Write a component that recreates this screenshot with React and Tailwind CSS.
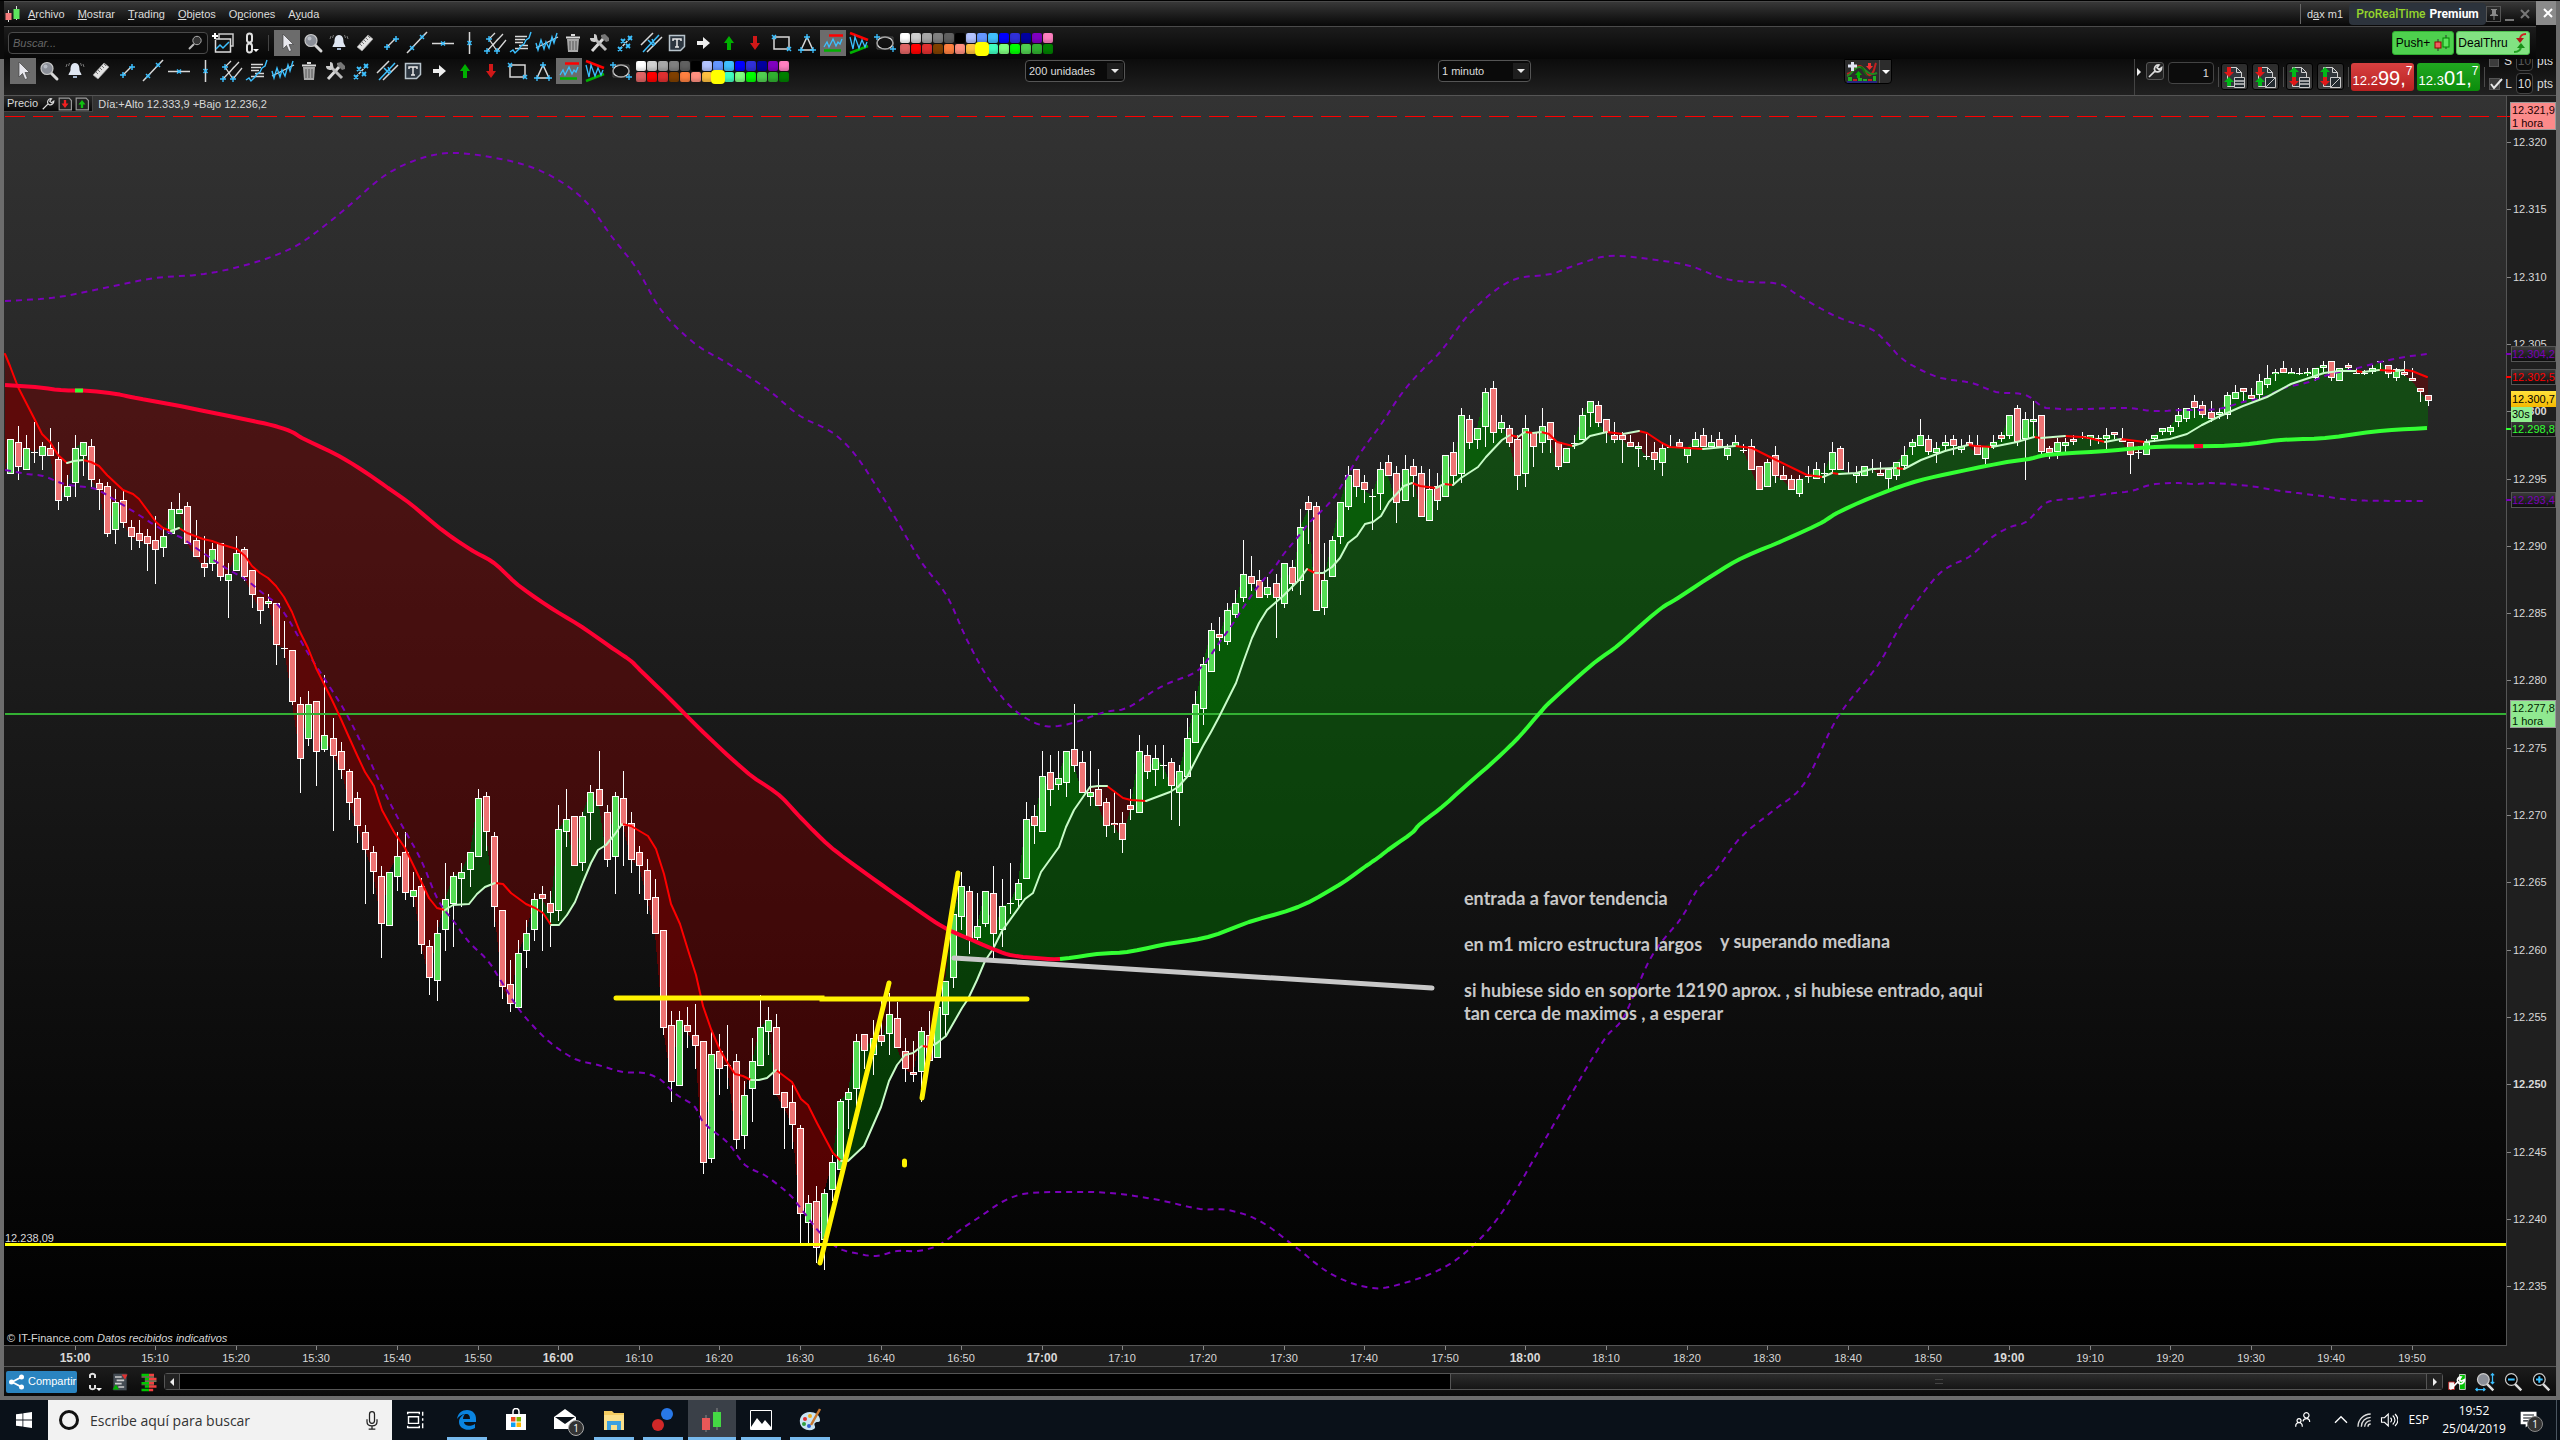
import React, { useMemo, useState } from "react";

// one entry per minute from 14:52: colour, high, body top, body bottom, low (chart units)
const CANDLES = `
g439,439,474,474 r426,442,467,480 g435,448,470,470 d422,452,452,463 g442,446,456,470 r428,448,456,456 r442,459,501,510 g475,486,497,501
g435,448,483,497 g442,442,456,476 r439,446,480,487 r479,483,490,510 r482,486,534,537 g489,502,530,544 r490,500,523,528 r520,527,537,550
r520,533,541,548 r529,536,544,571 r516,540,550,584 g529,536,548,557 g502,509,534,534 g493,509,514,514 r502,506,544,544 r520,540,557,557
r536,563,568,577 g543,549,564,571 r543,543,577,581 g563,574,581,618 g536,553,571,571 r547,549,577,581 r570,570,595,608 r597,597,611,624
g594,601,604,608 r603,603,645,665 d621,648,648,658 r650,650,702,705 r697,704,759,793 g691,704,739,746 r701,701,752,786 g675,735,750,752
r718,738,756,831 r742,751,770,779 r769,771,803,820 r792,798,826,843 r825,832,850,904 r846,852,872,894 r866,876,924,958 g872,872,926,926
g832,856,877,891 r832,852,893,900 g872,890,897,907 r878,886,945,954 r940,946,978,995 g920,933,981,1001 g863,899,930,951 g872,876,904,947
g863,872,879,907 g852,852,870,887 g789,798,857,857 r792,796,832,851 r832,836,907,927 r910,910,987,999 r960,984,1004,1012 g940,953,1008,1008
g920,933,951,968 g893,899,930,941 r886,894,899,951 r891,903,913,947 g805,829,911,921 g789,819,832,847 r816,816,866,866 g812,816,863,871
g785,792,813,840 r751,789,806,806 r805,812,860,867 g792,796,857,894 r771,798,826,866 r812,823,860,873 r846,852,866,894 r859,870,900,914
r879,897,934,934 r930,930,1028,1035 r1011,1025,1082,1102 g1011,1020,1086,1086 r1007,1025,1032,1048 r1004,1035,1046,1069 r1041,1041,1163,1174 g1031,1054,1159,1163
r1034,1051,1069,1095 d1025,1065,1065,1089 r1054,1061,1140,1149 g1081,1095,1136,1149 g1038,1061,1089,1122 g995,1027,1066,1066 g1007,1020,1032,1055 r1014,1027,1095,1095
r1092,1092,1108,1149 r1085,1102,1125,1149 r1125,1128,1214,1244 g1195,1203,1223,1244 r1186,1201,1248,1263 g1189,1193,1240,1270 g1155,1162,1190,1201 g1099,1101,1170,1170
g1088,1092,1100,1129 g1034,1041,1089,1111 r1034,1034,1051,1069 g1020,1038,1055,1075 r1000,1035,1042,1046 g993,1014,1034,1055 r1002,1018,1048,1048 r1038,1051,1069,1082
r1041,1072,1075,1082 g1027,1031,1072,1102 r1011,1035,1061,1061 g1007,1007,1058,1058 g981,981,1015,1036 g914,914,978,988 g872,886,917,930 r886,891,940,954
g893,926,938,940 g891,891,924,927 r866,893,934,958 g879,906,930,947 d863,903,903,914 g879,883,900,909 g802,819,879,879 r805,816,826,844
g751,776,832,832 r755,772,790,806 g751,778,785,790 g751,751,783,797 r704,749,766,772 r751,762,793,793 g751,792,797,806 r769,789,806,806
r798,802,826,837 r792,823,825,833 r812,823,840,853 r789,805,810,820 g735,751,813,813 r745,755,772,779 g745,758,770,786 d745,765,765,779
r758,762,786,820 g765,771,793,826 g718,738,777,777 g691,704,743,743 g657,664,709,725 g623,630,672,672 r617,634,638,651 g603,610,642,645
g590,603,615,618 g540,574,598,602 r556,576,584,591 r570,580,598,598 g577,587,595,598 r574,583,598,638 g563,563,604,608 r560,567,584,591
g509,527,581,595 r496,502,510,544 r502,506,611,611 g543,580,608,615 g536,540,577,577 g502,502,537,544 g466,475,507,510 r469,469,487,497
r475,482,490,503 d489,496,496,530 g462,469,494,510 r455,462,476,476 r466,473,503,523 g455,469,501,501 r459,466,476,497 r466,473,517,517
g469,489,521,521 r473,486,501,510 g455,455,497,497 r442,452,476,484 g408,415,474,483 r415,419,443,449 g428,428,440,449 g388,392,427,447
r381,388,433,443 g415,422,429,433 r425,428,443,447 r435,439,476,490 g415,428,474,487 r432,432,447,467 g408,426,443,453 r422,422,440,453
r442,442,467,470 g448,448,463,463 d435,443,443,449 g408,415,440,440 g401,401,413,427 r401,405,423,427 r419,419,433,443 r422,435,440,443
r432,435,440,463 r435,442,447,447 g442,446,449,467 d433,456,456,460 r442,452,460,470 g444,448,463,476 d435,447,447,448 r439,442,447,447
g447,447,456,463 g432,439,447,447 r428,435,447,447 g435,442,447,447 r432,439,447,447 g444,448,456,460 g435,442,447,447 d444,450,450,453
r439,446,470,470 r466,466,490,490 g459,462,487,487 r446,455,476,483 r466,475,480,480 r475,479,490,490 g475,479,494,497 d466,476,476,483
g462,469,479,479 d463,473,473,483 g442,452,470,473 r446,448,470,470 d462,473,473,474 g466,473,476,483 g466,466,476,476 d459,469,469,473
r462,473,476,476 g469,469,479,490 g462,462,476,480 g446,455,466,469 g439,442,447,455 g419,435,446,446 r435,439,452,455 g442,448,453,463
g435,442,446,450 r435,439,446,455 g439,446,450,453 r435,442,446,446 r435,445,455,455 g446,446,459,464 g435,442,446,449 r432,435,439,442
g415,415,436,439 r405,408,442,446 g412,419,439,480 g401,419,422,436 r415,415,452,456 r446,448,453,459 g438,442,452,459 g438,442,446,455
r435,439,442,445 d432,436,436,439 g435,435,439,446 d435,438,438,444 g428,435,439,449 r432,432,435,439 r428,439,442,442 r442,442,455,474
d446,452,452,459 g439,442,455,455 g435,435,439,442 g428,428,432,435 g425,427,432,435 g408,415,422,427 g408,408,419,422 r395,401,408,418
r401,405,415,418 r401,412,419,422 g408,412,415,419 g392,395,415,419 g385,392,399,399 r388,388,392,402 r388,395,399,399 g374,381,395,399
g365,378,385,388 g369,372,374,381 r361,368,373,373 g368,372,374,374 d368,373,373,375 g368,372,374,376 g368,368,378,381 g361,365,368,372
r361,361,378,381 g368,368,381,381 r363,365,368,372 d368,373,373,374 d370,373,373,375 g365,368,372,374 d361,361,361,370 r365,365,374,378
g368,369,378,381 r361,372,375,376 r368,378,381,381 r388,388,392,402 r395,395,401,406`;

const FAST_MA = `5,354 10,366 18,387 35,420 42,434 50,442 58,455 67,463 74,461 83,460 91,462 99,466 107,475 123,490 133,494 139,499 156,522 163,528 171,531 179,528 187,533 203,539 212,541 220,544 237,549 245,556 252,566 260,573 268,578 276,586 284,597 292,612 300,632 308,648 316,668 324,684 332,700 340,717 348,735 357,755 365,772 374,786 382,810 394,832 405,848 421,881 429,898 437,908 445,910 453,905 469,904 477,894 485,887 495,883 503,884 511,893 526,904 535,908 543,913 551,925 559,925 567,915 575,902 583,882 591,863 598,850 606,845 615,834 622,824 631,826 648,836 656,849 664,874 671,904 680,924 688,950 696,975 703,1006 711,1029 719,1048 727,1062 735,1074 743,1076 751,1080 759,1080 767,1078 776,1070 792,1082 801,1099 808,1105 817,1123 833,1153 841,1161 848,1161 864,1146 881,1107 889,1081 897,1065 905,1055 913,1053 922,1046 929,1047 937,1043 946,1036 962,1008 968,999 977,980 985,961 993,949 1002,931 1025,899 1033,893 1041,872 1059,847 1066,827 1074,810 1090,787 1098,786 1107,786 1123,798 1131,800 1146,801 1154,798 1170,792 1178,787 1187,777 1203,746 1211,732 1219,717 1236,683 1244,660 1252,638 1259,623 1267,610 1283,596 1291,588 1299,580 1307,569 1315,573 1323,573 1332,567 1340,558 1348,543 1357,536 1365,524 1373,522 1381,516 1389,502 1404,486 1412,483 1420,486 1436,488 1444,484 1453,485 1461,478 1478,467 1486,457 1502,440 1510,435 1518,437 1525,432 1533,433 1541,432 1549,434 1557,442 1573,446 1582,443 1590,436 1607,432 1623,434 1639,431 1647,433 1662,443 1670,447 1687,448 1703,449 1735,446 1752,448 1776,460 1807,475 1823,477 1832,473 1839,474 1856,473 1872,469 1896,468 1904,469 1921,460 1945,451 1968,445 1976,446 1992,447 2017,442 2034,437 2041,438 2065,436 2082,437 2089,438 2105,442 2121,439 2145,442 2170,439 2187,434 2202,425 2218,417 2243,406 2267,397 2291,384 2324,373 2339,371 2356,371 2363,372 2379,370 2396,371 2404,370 2412,371 2427,377`;

const SLOW_MA = `5,385 35,387 61,390 90,391 116,394 131,397 147,400 180,406 204,411 229,416 253,421 275,426 292,432 302,438 339,456 365,472 388,488 408,502 437,526 453,538 473,551 494,563 518,585 551,608 582,627 612,648 631,661 640,670 671,700 703,732 749,774 779,795 800,817 825,842 842,856 882,885 909,904 935,922 951,931 972,940 993,949 1010,955 1036,958 1060,959 1097,954 1127,952 1167,944 1208,937 1249,922 1298,907 1339,885 1366,866 1379,857 1388,850 1413,832 1419,825 1442,807 1469,783 1493,762 1518,738 1538,715 1549,703 1594,663 1616,647 1647,620 1663,607 1678,598 1710,577 1740,559 1782,541 1821,523 1837,513 1875,496 1914,482 1952,473 2007,462 2029,459 2046,455 2106,451 2155,447 2216,446 2249,444 2281,440 2325,438 2380,431 2427,428`;

const BAND_UP = `5,301 40,299 65,296 114,286 155,278 204,274 253,263 294,247 323,227 351,204 384,176 416,160 449,153 490,157 531,167 563,183 588,204 612,237 637,269 661,310 694,343 727,363 767,389 800,416 833,433 857,457 890,509 922,563 947,596 967,640 988,678 1009,705 1029,720 1045,726 1058,726 1076,722 1105,712 1127,708 1152,692 1169,683 1194,673 1205,663 1219,643 1232,625 1243,608 1259,585 1274,568 1283,555 1297,538 1310,522 1332,500 1346,478 1361,452 1382,423 1397,400 1411,382 1424,368 1442,350 1469,314 1510,281 1551,274 1576,265 1608,256 1649,259 1690,266 1722,278 1747,282 1780,284 1796,294 1829,313 1850,322 1873,330 1889,345 1900,357 1917,368 1941,378 1972,383 1996,392 2026,395 2046,408 2128,408 2153,411 2183,410 2218,409 2243,402 2265,397 2284,388 2309,382 2331,374 2358,368 2380,362 2405,357 2427,354`;

const BAND_LOW = `5,470 27,474 43,476 61,483 76,486 86,487 98,490 118,502 139,515 163,530 180,537 196,548 212,559 229,570 245,579 265,595 278,605 290,622 306,650 324,678 347,715 367,755 382,787 400,822 421,860 438,900 455,923 469,942 488,961 501,981 518,1008 535,1028 552,1044 575,1059 598,1065 623,1072 644,1073 661,1080 674,1093 695,1107 703,1122 728,1143 745,1165 766,1176 791,1196 802,1210 821,1234 838,1248 855,1253 876,1256 897,1251 918,1251 939,1245 960,1230 981,1216 1002,1202 1023,1194 1060,1192 1110,1193 1159,1200 1200,1209 1228,1210 1260,1221 1298,1249 1331,1274 1371,1288 1401,1284 1445,1267 1478,1241 1505,1208 1543,1143 1576,1086 1606,1037 1622,1020 1636,990 1649,961 1663,940 1682,917 1697,890 1716,870 1740,838 1774,810 1804,784 1837,718 1878,665 1904,620 1936,577 1952,565 1969,557 1991,538 2010,527 2026,522 2043,505 2051,501 2079,498 2106,494 2131,491 2150,485 2172,483 2196,484 2210,483 2249,486 2281,491 2314,495 2353,500 2402,501 2427,501`;

const minuteX = m => 74.6 + 8.06 * m;
const toPoints = str => str.split(" ").map(p => p.split(",").map(Number));
const toString = points => points.map(p => p.map(v => v.toFixed(1)).join(",")).join(" ");

// Hermite curve through the points, four steps for each span
function smooth(points) {
  const slope = i => {
    const a = points[Math.max(0, i - 1)];
    const b = points[Math.min(points.length - 1, i + 1)];
    return (b[1] - a[1]) / (b[0] - a[0]);
  };
  const out = [points[0]];
  for (let i = 1; i < points.length; i++) {
    const [x0, y0] = points[i - 1];
    const [x1, y1] = points[i];
    const w = x1 - x0;
    for (let s = 1; s <= 4; s++) {
      const t = s / 4;
      const y =
        (2 * t ** 3 - 3 * t ** 2 + 1) * y0 +
        (t ** 3 - 2 * t ** 2 + t) * w * slope(i - 1) +
        (-2 * t ** 3 + 3 * t ** 2) * y1 +
        (t ** 3 - t ** 2) * w * slope(i);
      out.push([x0 + w * t, y]);
    }
  }
  return out;
}

const candles = CANDLES.trim().split(/\s+/).map((row, i) => {
  const [high, top, bottom, low] = row.slice(1).split(",").map(Number);
  const kind = row[0];
  return { x: Math.round(minuteX(i - 8)), high, top, bottom, low, kind, close: kind === "g" ? top : bottom };
});

function valueAt(points, x) {
  for (let i = 1; i < points.length; i++) {
    if (points[i][0] >= x) {
      const [x0, y0] = points[i - 1];
      const [x1, y1] = points[i];
      return y0 + ((y1 - y0) * (x - x0)) / (x1 - x0);
    }
  }
  return points[points.length - 1][1];
}

// splits the area between the closes and an average into the part above it and the part below it
function clouds(points) {
  const out = { up: "", down: "" };
  const rows = [{ x: 5, close: 474 }, ...candles].map(c => ({ x: c.x, c: c.close, m: valueAt(points, c.x) }));
  for (let i = 1; i < rows.length; i++) {
    const a = rows[i - 1];
    const b = rows[i];
    const da = a.m - a.c;
    const db = b.m - b.c;
    if (da * db >= 0) {
      out[da + db > 0 ? "up" : "down"] += `M${a.x} ${a.c}L${b.x} ${b.c}L${b.x} ${b.m}L${a.x} ${a.m}Z`;
    } else {
      const t = da / (da - db);
      const x = a.x + (b.x - a.x) * t;
      const y = a.c + (b.c - a.c) * t;
      out[da > 0 ? "up" : "down"] += `M${a.x} ${a.c}L${x} ${y}L${a.x} ${a.m}Z`;
      out[db > 0 ? "up" : "down"] += `M${b.x} ${b.c}L${x} ${y}L${b.x} ${b.m}Z`;
    }
  }
  return out;
}

function bySlope(points) {
  const out = { up: "", down: "" };
  for (let i = 1; i < points.length; i++) {
    const [x0, y0] = points[i - 1];
    const [x1, y1] = points[i];
    out[y1 > y0 ? "down" : "up"] += `M${x0} ${y0}L${x1} ${y1}`;
  }
  return out;
}

const PRICES = Array.from({ length: 18 }, (_, i) => 12320 - i * 5);
const TIMES = Array.from({ length: 30 }, (_, i) => i * 10);

function formatPrice(p) {
  return `12.${String(p - 12000).padStart(3, "0")}`;
}

function Tag({ y, text, color }) {
  return (
    <g>
      <path d={`M2506 ${y}h5`} stroke={color} strokeWidth="2" />
      <rect x="2511.5" y={y - 7.5} width="44" height="15" fill="url(#tag)" stroke="#555" />
      <text x="2512" y={y + 4} fill={color}>{text}</text>
    </g>
  );
}

function Chart() {
  const data = useMemo(() => {
    const fast = toPoints(FAST_MA);
    const slow = smooth(toPoints(SLOW_MA));
    return {
      fast: bySlope(fast),
      fastCloud: clouds(fast),
      slowCloud: clouds(slow),
      slowRed: toString(slow.filter(p => p[0] <= 1060)),
      slowGreen: toString(slow.filter(p => p[0] >= 1060)),
      bandUp: toString(smooth(toPoints(BAND_UP))),
      bandLow: toString(smooth(toPoints(BAND_LOW))),
    };
  }, []);
  return (
    <svg
      viewBox="4 96 2552 1270"
      preserveAspectRatio="none"
      className="block w-full h-full font-['Liberation_Sans',sans-serif] text-[11px]"
    >
      <defs>
        <linearGradient id="back" x1="0" y1="0" x2="0" y2="1">
          <stop offset="0" stopColor="#333333" />
          <stop offset="1" stopColor="#000000" />
        </linearGradient>
        <linearGradient id="tag" x1="0" y1="0" x2="0" y2="1">
          <stop offset="0" stopColor="#3a3a3a" />
          <stop offset="1" stopColor="#0c0c0c" />
        </linearGradient>
        <linearGradient id="gold" x1="0" y1="0" x2="0" y2="1">
          <stop offset="0" stopColor="#ffe13c" />
          <stop offset="1" stopColor="#f5b800" />
        </linearGradient>
      </defs>
      <rect x="4" y="96" width="2552" height="1270" fill="#1f1f1f" />
      <rect x="4" y="96" width="2502" height="1249" fill="url(#back)" />

      <g fillOpacity="0.47" shapeRendering="crispEdges">
        <path d={data.slowCloud.down} fill="#750000" />
        <path d={data.slowCloud.up} fill="#007300" />
        <path d={data.fastCloud.down} fill="#750000" />
        <path d={data.fastCloud.up} fill="#007300" />
      </g>

      <g shapeRendering="crispEdges">
        {candles.map((c, i) => (
          <g key={i}>
            <rect x={c.x} y={c.high} width="1" height={c.low - c.high} fill="#fff" />
            {c.kind === "d" ? (
              <rect x={c.x - 3} y={c.top} width="7" height="1" fill="#fff" />
            ) : (
              <>
                <rect x={c.x - 3} y={c.top} width="7" height={c.bottom - c.top} fill="#fff" />
                <rect
                  x={c.x - 2}
                  y={c.top + 1}
                  width="5"
                  height={Math.max(1, c.bottom - c.top - 2)}
                  fill={c.kind === "g" ? "#55dd55" : "#ee7474"}
                />
              </>
            )}
          </g>
        ))}
      </g>

      <g fill="none">
        <path d="M5 714H2506" stroke="#33b033" strokeWidth="2" shapeRendering="crispEdges" />
        <path d="M5 116.5H2510" stroke="#f00" strokeDasharray="20 8" />
        <polyline points={data.bandUp} stroke="#7a00b8" strokeWidth="2" strokeDasharray="6 5" />
        <polyline points={data.bandLow} stroke="#7a00b8" strokeWidth="2" strokeDasharray="6 5" />
        <path d={data.fast.down} stroke="#f00" strokeWidth="2" strokeLinecap="round" />
        <path d={data.fast.up} stroke="#c8fcc8" strokeWidth="2" strokeLinecap="round" />
        <polyline points={data.slowRed} stroke="#ff0033" strokeWidth="4" strokeLinejoin="round" />
        <polyline points={data.slowGreen} stroke="#33ff33" strokeWidth="4" strokeLinejoin="round" />
        <path d="M75 390.5H83" stroke="#33ff33" strokeWidth="4" />
        <path d="M2194 446H2203" stroke="#ff0033" strokeWidth="4" />
        <path d="M5 1244.5H2506" stroke="#ffff00" strokeWidth="3" shapeRendering="crispEdges" />
        <g stroke="#fff200" strokeWidth="5" strokeLinecap="round">
          <path d="M616 998H822V999H1027" />
          <path d="M889 983L820 1263" />
          <path d="M958 873L922 1098" />
          <path d="M904.500 1161V1165" />
        </g>
        <path d="M954 958L1432 988" stroke="#c8c8c8" strokeWidth="5" strokeLinecap="round" />
      </g>

      <g className="font-['Lato','Noto_Sans',sans-serif] text-[18px] font-bold" fill="#c8c8c8">
        <text x="1464" y="905">entrada a favor tendencia</text>
        <text x="1464" y="951">en m1 micro estructura largos</text>
        <text x="1720" y="948">y superando mediana</text>
        <text x="1464" y="997">si hubiese sido en soporte 12190 aprox. , si hubiese entrado, aqui</text>
        <text x="1464" y="1020">tan cerca de maximos , a esperar</text>
      </g>

      <g fill="#d8d8d8">
        <text x="5" y="1242">12.238,09</text>
        <text x="7" y="1342">© IT-Finance.com <tspan fontStyle="italic">Datos recibidos indicativos</tspan></text>
      </g>

      <g shapeRendering="crispEdges" fill="none" stroke="#555">
        <path d="M4 1345.5H2506.5V96" />
      </g>
      <g fill="#d8d8d8">
        {PRICES.map(p => {
          const y = Math.round(142 + (12320 - p) * 13.46);
          return (
            <g key={p}>
              <path d={`M2507 ${y + 0.5}h4`} stroke="#888" />
              <text x="2513" y={y + 4} fontWeight={p === 12250 || p === 12300 ? "bold" : "normal"}>{formatPrice(p)}</text>
            </g>
          );
        })}
        {TIMES.map(m => {
          const x = Math.round(minuteX(m));
          const hour = 15 + Math.floor(m / 60);
          return (
            <g key={m} textAnchor="middle">
              <path d={`M${x + 0.5} 1346v4`} stroke="#888" />
              <text x={x} y="1362" fontWeight={m % 60 === 0 ? "bold" : "normal"} fontSize={m % 60 === 0 ? 12 : 11}>
                {`${hour}:${String(m % 60).padStart(2, "0")}`}
              </text>
            </g>
          );
        })}
      </g>

      <Tag y={354} text="12.304,2" color="#7a00b8" />
      <Tag y={377} text="12.302,5" color="#ff0000" />
      <Tag y={429} text="12.298,8" color="#33ff33" />
      <Tag y={500} text="12.293,4" color="#7a00b8" />
      <rect x="2511" y="391" width="45" height="16" fill="url(#gold)" />
      <text x="2512" y="403" fill="#000">12.300,7</text>
      <rect x="2511" y="407" width="21" height="15" fill="#90ee90" />
      <text x="2512" y="418" fill="#000">30s</text>
      <g>
        <rect x="2510.5" y="102.5" width="45" height="27" fill="#fb8a8a" stroke="#999" />
        <text x="2512" y="114" fill="#200">12.321,9</text>
        <text x="2512" y="127" fill="#200">1 hora</text>
        <rect x="2510.5" y="700.5" width="45" height="27" fill="#90e890" stroke="#999" />
        <text x="2512" y="712" fill="#020">12.277,8</text>
        <text x="2512" y="725" fill="#020">1 hora</text>
      </g>
    </svg>
  );
}

const W = "#d8d8d8";
const B = "#3cc0ff";

const cross = (x, y) => `M${x - 2} ${y - 2}l4 4m0 -4l-4 4`;
const plus = (x, y) => `M${x - 3} ${y}h6m-3 -3v6`;

const TOOL_ICONS = {
  Puntero: <path d="M8 3v15l3.500 -3.500 2.500 6 2.500 -1 -2.500 -6h4.500z" fill="#e8e8ee" stroke="#444" strokeWidth="0.7" />,
  Zoom: (
    <>
      <path d="M14 14l6 6" stroke={W} strokeWidth="3" strokeLinecap="round" />
      <circle cx="10" cy="9.500" r="6" fill="#8b8f98" stroke="#c8c8c8" strokeWidth="1.200" />
      <circle cx="8.500" cy="7.500" r="2" fill="#b8bcc4" />
    </>
  ),
  Alerta: (
    <>
      <path d="M12 4c-4 0 -4.500 4 -4.500 7 0 2 -2 3 -2 5h13c0 -2 -2 -3 -2 -5 0 -3 -.5 -7 -4.500 -7z" fill="#dfe6f2" />
      <path d="M10 17h4v2h-4z" fill="#9fb0c8" />
      <path d="M4 5l-1 3M6.500 4l-1 3M20 5l1 3M17.500 4l1 3" stroke="#777" />
    </>
  ),
  Regla: (
    <>
      <path d="M4 16l11 -12 5 4 -11 12z" fill="#e4e4e4" stroke="#999" strokeWidth="0.7" />
      <path d="M7 13l2 2M9 11l2 2M11 9l2 2M13 7l2 2M15 5l2 2" stroke="#777" />
    </>
  ),
  Segmento: (
    <>
      <path d="M8 16l8 -8" stroke={W} strokeWidth="1.500" />
      <path d={plus(8, 16) + plus(17, 8)} stroke={B} strokeWidth="1.500" />
    </>
  ),
  Recta: (
    <>
      <path d="M2 22L22 1" stroke={W} strokeWidth="1.500" />
      <path d={cross(7, 17) + cross(17, 6)} stroke={B} strokeWidth="1.500" />
    </>
  ),
  Horizontal: (
    <>
      <path d="M1 12.500h22" stroke={W} strokeWidth="1.500" />
      <path d={cross(12, 12.500)} stroke={B} strokeWidth="1.500" />
    </>
  ),
  Vertical: (
    <>
      <path d="M12.500 1v22" stroke={W} strokeWidth="1.500" />
      <path d={cross(12.500, 12)} stroke={B} strokeWidth="1.500" />
    </>
  ),
  Horquilla: (
    <>
      <path d="M6 8l6 -6M4 20l16 -17M14 20l9 -11M10 14l5 -6M6 8l8 12" stroke={W} strokeWidth="1.300" />
      <path d={plus(6, 8) + plus(4, 20) + plus(14, 20)} stroke={B} strokeWidth="1.400" />
    </>
  ),
  Fibonacci: (
    <>
      <path d="M6 5.500h12M6 8.500h10M6 11.500h8M10 14.500h9M6 17.500h13" stroke={W} strokeWidth="1.300" />
      <path d="M1 21l3 -2 2 3 4 -4 2 -3 3 -2 2 -4 3 -2 2 -6" stroke={B} strokeWidth="1.400" />
    </>
  ),
  Regresion: (
    <>
      <path d="M1 17L23 6" stroke={W} strokeWidth="1.300" />
      <path d="M1 12l2 7 3 -10 3 9 2 -7 3 6 3 -11 2 6 3 -10" stroke={B} strokeWidth="1.400" />
    </>
  ),
  Borrar: (
    <>
      <path d="M6 8h12l-1 13h-10z" fill="#a8a8a8" />
      <path d="M5 6.500h14M10 4h4" stroke={W} strokeWidth="2" />
      <path d="M9 10v9M12 10v9M15 10v9" stroke="#555" />
    </>
  ),
  Configurar: (
    <>
      <path d="M14 4l4 -1 4 4v3l-3 1 -5 -5z" fill="#777" />
      <path d="M5 20L16 8" stroke={W} strokeWidth="3" />
      <path d="M8 8l11 11" stroke="#bbb" strokeWidth="3" />
      <path d="M7 3v4H3c0 3 2 4 5 4 2 -1 3 -3 2 -5 0 -2 -1 -3 -3 -3z" fill="#ccc" />
    </>
  ),
  Extension: (
    <>
      <path d="M7 18L18 6" stroke={W} strokeWidth="1.500" strokeDasharray="3 1" />
      <path d={cross(7, 18) + cross(17, 7) + cross(10, 10) + cross(15, 15)} stroke={B} strokeWidth="1.800" />
    </>
  ),
  Canal: (
    <>
      <path d="M2 14L14 2M8 21L23 6" stroke={W} strokeWidth="1.500" />
      <path d="M4 21L20 4M9 9l6 6M13 8l3 6" stroke={B} strokeWidth="1.500" />
    </>
  ),
  Texto: (
    <>
      <path d="M4.500 4.500h15v11l-4 4h-11z" fill="#2c3640" stroke="#b8c4cc" strokeWidth="1.500" />
      <path d="M8 10V8h8v2M12 8v8M10 16h4" stroke="#e8e8e8" strokeWidth="1.500" />
    </>
  ),
  "Flecha derecha": <path d="M6 10h6V6l7 6 -7 6v-4H6z" fill="#eeeeee" />,
  "Flecha arriba": <path d="M10 19v-7H7l5 -7 5 7h-3v7z" fill="#00b000" />,
  "Flecha abajo": <path d="M10 5v7H7l5 7 5 -7h-3V5z" fill="#d01818" />,
  Rectangulo: (
    <>
      <path d="M5 6h15v12h-15z" stroke={W} strokeWidth="1.500" />
      <path d={cross(5, 6) + cross(20, 18)} stroke={B} strokeWidth="1.500" />
    </>
  ),
  Triangulo: (
    <>
      <path d="M12 6l-6 13h12z" stroke={W} strokeWidth="1.500" />
      <path d={plus(12, 6) + plus(6, 19) + plus(18, 19)} stroke={B} strokeWidth="1.300" />
    </>
  ),
  Soportes: (
    <>
      <path d="M8 4.500h14" stroke="#f00" strokeWidth="2.500" />
      <path d="M3 19.500h17" stroke="#00b000" strokeWidth="2.500" />
      <path d="M3 16l3 -5 2 5 4 -8 3 7 2 -4 2 2 2 -5" stroke={B} strokeWidth="1.300" />
    </>
  ),
  Patrones: (
    <>
      <path d="M3 2l18 7" stroke="#f00" strokeWidth="2.500" />
      <path d="M3 22l18 -7" stroke="#00b000" strokeWidth="2.500" />
      <path d="M3 6l3 12 2 -12 4 11 3 -8 3 7 2 -5" stroke={B} strokeWidth="1.300" />
    </>
  ),
  Elipse: (
    <>
      <ellipse cx="12" cy="12" rx="8" ry="6" stroke={W} strokeWidth="1.500" />
      <path d="M4 6h16v12H4z" stroke="#555" strokeWidth="0.800" />
      <path d={plus(4, 6) + plus(20, 18)} stroke={B} strokeWidth="1.300" />
    </>
  ),
};

function Svg({ size = "w-6 h-6", children }) {
  return (
    <svg viewBox="0 0 24 24" fill="none" className={`shrink-0 ${size}`}>
      {children}
    </svg>
  );
}

const PALETTE = [
  ["#ffffff", "#d0d0d0", "#a8a8a8", "#808080", "#606060", "#000000", "#b4c4ff", "#6496ff", "#40c0ff", "#0000ff", "#3030d8", "#0000a0", "#8000c0", "#ff80c0"],
  ["#e06464", "#ff0000", "#e03030", "#804000", "#ff8040", "#ff9080", "#ffc040", "#ffff00", "#40ffc0", "#80ff80", "#00ff00", "#50d050", "#30b030", "#008000"],
];

function DrawingTools() {
  const [active, setActive] = useState("Puntero");
  return (
    <div className="flex items-center">
      {Object.entries(TOOL_ICONS).map(([name, icon]) => (
        <button
          key={name}
          aria-label={name}
          onClick={() => setActive(name)}
          className={`w-[26px] h-[26px] flex items-center justify-center ${
            name === active || name === "Soportes" ? "bg-[#6c6c6c]" : ""
          }`}
        >
          <Svg>{icon}</Svg>
        </button>
      ))}
      <div className="ml-[2px] flex flex-col gap-px">
        {PALETTE.map((row, i) => (
          <div key={i} className="flex gap-px">
            {row.map(color => (
              <button
                key={color}
                aria-label={color}
                style={{ backgroundColor: color }}
                className={`w-[10px] h-[10px] rounded-[2px] ${
                  color === "#ffff00" ? "relative ring-2 ring-[#ffff00]" : "shadow-[inset_0_-3px_3px_rgba(0,0,0,0.15)]"
                }`}
              />
            ))}
          </div>
        ))}
      </div>
    </div>
  );
}

const MENU = [["", "A", "rchivo"], ["", "M", "ostrar"], ["", "T", "rading"], ["", "O", "bjetos"], ["O", "p", "ciones"], ["A", "y", "uda"]];

function Chain({ split }) {
  return (
    <Svg>
      <path d={split ? "M9 8V5a3 3 0 0 1 5 0v3M9 15v3a3 3 0 0 0 5 0v-3" : "M9 10V5a2.500 2.500 0 0 1 5 0v4a2.500 2.500 0 0 1 -5 0zM9 19v-4a2.500 2.500 0 0 1 5 0v4a2.500 2.500 0 0 1 -5 0z"} stroke="#e0e0e0" strokeWidth="2" />
      <path d="M15 18h6l-3 3z" fill="#fff" />
    </Svg>
  );
}

function TitleBar() {
  return (
    <div className="h-[25px] flex items-center bg-linear-to-b from-[#383838] to-[#080808] border-t border-[#4a4a4a] text-[#dcdcdc]">
      <svg viewBox="0 0 16 18" className="w-4 h-[18px] mr-2">
        <path d="M4.500 5v12M12.500 1v14" stroke="#ddd" />
        <rect x="1.500" y="8" width="6" height="7" fill="#f47c7c" />
        <rect x="9.500" y="4" width="6" height="10" fill="#5ee65e" />
      </svg>
      <nav className="flex gap-[13px]">
        {MENU.map(([a, key, b]) => (
          <button key={key + b}>
            {a}
            <span className="underline">{key}</span>
            {b}
          </button>
        ))}
      </nav>
      <div className="ml-auto flex items-center">
        <span className="border-l border-[#666] px-[6px] leading-5">
          d<span className="underline">a</span>x m1
        </span>
        <span className="w-[137px] h-[22px] flex items-center justify-center gap-1 bg-[#2c333c] rounded-sm font-['Roboto','Liberation_Sans',sans-serif] text-[12px] font-medium text-[#96d62c]">
          ProRealTime <b className="text-white">Premium</b>
        </span>
        <button aria-label="Fijar" className="w-[15px] h-4 border border-[#555] flex items-center justify-center">
          <svg viewBox="0 0 12 12" className="w-3 h-3"><path d="M3 1h6v1H8v4l2 1v1H2V7l2 -1V2H3zM5.500 8h1v4h-1z" fill="#888" /></svg>
        </button>
        <button aria-label="Minimizar" className="w-4 h-4 flex items-end justify-center pb-[1px]">
          <span className="w-[9px] h-[2px] bg-[#777]" />
        </button>
        <button aria-label="Cerrar" className="w-4 h-4 flex items-center justify-center mr-[3px]">
          <svg viewBox="0 0 10 10" className="w-[10px] h-[10px]"><path d="M1 1l8 8M9 1l-8 8" stroke="#777" strokeWidth="2" /></svg>
        </button>
      </div>
    </div>
  );
}

function MainToolbar() {
  return (
    <div className="h-[33px] flex items-center bg-linear-to-b from-[#1c1c1c] to-[#070707] border-t border-[#4a4a4a]">
      <div className="ml-1 w-[200px] h-[22px] flex items-center rounded border border-[#4a4a4a] bg-[#0c0c0c] px-1">
        <input aria-label="Buscar" placeholder="Buscar..." className="flex-1 min-w-0 italic bg-transparent outline-none placeholder:text-[#666]" />
        <svg viewBox="0 0 16 16" fill="none" className="w-4 h-4">
          <circle cx="10" cy="5.500" r="4.200" stroke="#aaa" fill="#333" />
          <path d="M7 9l-5 5" stroke="#bbb" strokeWidth="2" />
        </svg>
      </div>
      <button aria-label="Nuevo gráfico" className="ml-[3px]">
        <Svg>
          <path d="M8 8V3h14v12h-3" stroke="#ccc" strokeWidth="1.500" />
          <path d="M4.500 9v12h15V8h-15" stroke="#ddd" strokeWidth="1.500" fill="#111" />
          <path d="M5 18l4 -4 3 3 6 -6" stroke={B} strokeWidth="1.500" />
          <path d="M1 5h6M4 2v6" stroke="#fff" strokeWidth="2" />
        </Svg>
      </button>
      <button aria-label="Vincular" className="ml-[3px]"><Chain /></button>
      <span className="w-px h-4 bg-[#444] ml-[6px] mr-[5px]" />
      <DrawingTools />
      <div className="ml-auto flex gap-[2px] mr-[6px] text-black text-[12px]">
        <button className="w-[62px] h-6 flex items-center justify-center gap-1 rounded-[3px] bg-[#4ed04e] border border-[#2fae2f]">
          Push+
          <svg viewBox="0 0 16 16" className="w-4 h-4">
            <path d="M4 4v12M12 0v14" stroke="#333" />
            <rect x="1" y="7" width="6" height="6" fill="#f06060" stroke="#900" />
            <rect x="9" y="3" width="6" height="9" fill="#5ee65e" stroke="#080" />
          </svg>
        </button>
        <button className="w-[74px] h-6 flex items-center justify-center gap-1 rounded-[3px] bg-[#82e282] border border-[#4fc04f]">
          DealThru
          <svg viewBox="0 0 16 20" fill="none" className="w-4 h-5">
            <path d="M14 1C9 1 8 3 8 7" stroke="#d02020" strokeWidth="2" />
            <path d="M4 5h8l-4 5z" fill="#b01818" />
            <path d="M2 19c5 0 7 -2 7 -6" stroke="#20a020" strokeWidth="2" />
            <path d="M5 15h8l-4 -5z" fill="#189018" />
          </svg>
        </button>
      </div>
    </div>
  );
}

function Dropdown({ label, options, width }) {
  return (
    <div className={`relative h-[22px] flex items-center rounded border border-[#555] bg-[#0a0a0a] ${width}`}>
      <select aria-label={label} className="appearance-none w-full h-full bg-transparent pl-[3px] outline-none">
        {options.map(o => <option key={o}>{o}</option>)}
      </select>
      <svg viewBox="0 0 16 16" className="absolute right-[1px] w-4 h-4 pointer-events-none">
        <rect width="16" height="16" fill="#1e1e1e" />
        <path d="M4 6h8l-4 4z" fill="#e8e8e8" />
      </svg>
    </div>
  );
}

function OrderButton({ name, top, bottom, flip, slash }) {
  return (
    <button aria-label={name} className="w-[27px] h-[27px] rounded-[3px] border border-black bg-linear-to-b from-[#2c2c2c] to-[#3c3c3c] flex items-center justify-center">
      <Svg>
        <path d="M5.500 2.500h9l5 5v14h-14z" fill="#30363c" stroke="#d0d0d0" />
        <path d="M14.500 2.500v5h5" stroke="#d0d0d0" />
        <path d={slash ? "M12.500 12.500h10v10h-10zM12.500 22.500l10 -10" : "M12.500 12.500h10v3.500h-10zM12.500 16h10v3h-10zM12.500 19h10v3.500h-10z"} fill="#222a30" stroke="#c8c8c8" />
        {flip ? (
          <path d="M2 7l5 -5 5 5H9v5H5V7z" fill={top} />
        ) : (
          <path d="M5 2h4v5h3l-5 5 -5 -5h3z" fill={top} />
        )}
        {flip ? (
          <path d="M5 12h4v4h3l-5 5 -5 -5h3z" fill={bottom} />
        ) : (
          <path d="M2 17l5 -5 5 5H9v4H5v-4z" fill={bottom} />
        )}
      </Svg>
    </button>
  );
}

function Divider() {
  return <span className="w-px self-stretch my-2 bg-[#4a4a4a]" />;
}

function Quote({ side, small, big, tiny, className }) {
  return (
    <button aria-label={side} className={`w-[63px] h-7 rounded-[3px] flex items-end justify-center text-white ${className}`}>
      <span className="text-[13px] leading-5">{small}</span>
      <span className="text-[20px] leading-[26px]">{big},</span>
      <span className="text-[12px] leading-4 self-start">{tiny}</span>
    </button>
  );
}

function StopRow({ name, checked, dim }) {
  return (
    <div className="shrink-0 flex items-center h-[23px] gap-1">
      <label className="relative flex items-center gap-[5px] w-[23px]">
        <input type="checkbox" defaultChecked={checked} className="appearance-none w-3 h-3 bg-[#3c3c3c] border border-[#555]" />
        {checked && (
          <svg viewBox="0 0 14 12" fill="none" className="absolute left-0 w-[14px] h-3 pointer-events-none">
            <path d="M2 6l3 4 8 -9" stroke="#e8e8e8" strokeWidth="2" />
          </svg>
        )}
        {name}
      </label>
      <input
        aria-label={`${name} pts`}
        defaultValue="10"
        className={`w-[17px] h-[21px] rounded border border-[#444] bg-[#0c0c0c] text-center outline-none ${dim ? "text-[#555]" : ""}`}
      />
      <span>pts</span>
    </div>
  );
}

function ChartToolbar() {
  return (
    <div className="h-[37px] flex bg-linear-to-b from-[#0c0c0c] to-[#212121] border-b border-[#555] text-[#dcdcdc]">
      <div className="ml-[6px] -mt-px self-start"><DrawingTools /></div>
      <div className="ml-[236px] mt-px self-start">
        <Dropdown label="Unidades" options={["200 unidades"]} width="w-[100px]" />
      </div>
      <div className="ml-[313px] mt-px self-start">
        <Dropdown label="Intervalo" options={["1 minuto"]} width="w-[93px]" />
      </div>
      <div className="ml-[313px] flex self-start h-[25px] bg-[#2c2c2c] border border-black rounded-b">
        <button aria-label="Indicadores" className="px-px">
          <svg viewBox="0 0 32 22" fill="none" className="w-8 h-[22px]">
            <path d="M1 13C8 12 9 4 14 5s5 11 10 9 4 -8 6 -12" stroke="#c02020" strokeWidth="2" />
            <path d="M1 15c6 -2 7 -10 13 -9s8 10 17 6" stroke="#208820" strokeWidth="2" />
            <path d="M14 5c5 0 5 9 9 10 -4 1 -6 -5 -9 -10z" fill="#0f6a0f" />
            <path d="M2 20v-4h4v4zM12 20v-3h4v3zM17 20v-2h4v2zM27 20v-5h3v5z" fill="#20b020" />
            <path d="M7 20v-2h4v2zM22 20v-2h4v2z" fill="#c02020" />
            <path d="M1 21h30" stroke="#2020d0" />
            <path d="M2 5h9M6.500 1v9" stroke="#e0e4f4" strokeWidth="3" />
            <path d="M22 2h3v3h2l-3.500 4 -3.500 -4h2z" fill="#f03030" />
            <path d="M11 17v-3H9l3.500 -4 3.500 4h-2v3z" fill="#00b000" />
          </svg>
        </button>
        <button aria-label="Más indicadores" className="w-3 border-l border-[#555] flex items-center justify-center">
          <svg viewBox="0 0 8 4" className="w-2 h-1"><path d="M0 0h8l-4 4z" fill="#fff" /></svg>
        </button>
      </div>
      <div className="ml-auto flex items-start gap-[4px] border-l border-[#444] pl-[2px]">
        <svg viewBox="0 0 5 8" className="w-[5px] h-2 mt-[9px]"><path d="M0 0v8l4 -4z" fill="#eee" /></svg>
        <button aria-label="Ajustes" className="mt-[3px] w-[18px] h-[18px] rounded-[3px] border border-[#555] bg-[#222] flex items-center justify-center">
          <Svg size="w-4 h-4"><path d="M3 21L13 11M12 12a6 6 0 0 1 6 -9l-3 4 3 3 4 -3a6 6 0 0 1 -8 6z" stroke="#ddd" strokeWidth="2.500" /></Svg>
        </button>
        <input aria-label="Cantidad" defaultValue="1" className="mt-[3px] w-[46px] h-[22px] rounded border border-[#444] bg-[#0c0c0c] text-right pr-1 outline-none" />
        <Divider />
        <div className="flex gap-1 pt-1 -ml-[2px]">
          <OrderButton name="Comprar a mercado" top="#e01818" bottom="#00b818" />
          <OrderButton name="Comprar con orden" top="#e01818" bottom="#00b818" slash />
        </div>
        <Divider />
        <div className="flex gap-1 pt-1 -ml-[2px]">
          <OrderButton name="Vender a mercado" top="#00b818" bottom="#e01818" flip />
          <OrderButton name="Vender con orden" top="#00b818" bottom="#e01818" flip slash />
        </div>
        <Divider />
        <div className="flex gap-[3px] pt-1 -ml-[2px]">
          <Quote side="Vender" small="12.2" big="99" tiny="7" className="bg-linear-to-b from-[#d84040] to-[#b82020]" />
          <Quote side="Comprar" small="12.3" big="01" tiny="7" className="bg-linear-to-b from-[#20a820] to-[#0a8c0a]" />
        </div>
        <Divider />
        <div className="h-9 overflow-hidden flex flex-col justify-end pr-[3px] text-[12px]">
          <StopRow name="S" dim />
          <StopRow name="L" checked />
        </div>
      </div>
    </div>
  );
}

function ChartHeader() {
  return (
    <div className="absolute left-0 top-0 flex items-center h-4 text-[#d8d8d8]">
      <div className="h-4 flex items-center gap-[3px] px-[3px] bg-linear-to-b from-[#2a2a2a] to-[#080808] border-r border-b border-[#444]">
        Precio
        <Svg size="w-[14px] h-[14px]"><path d="M3 21L13 11M12 12a6 6 0 0 1 6 -9l-3 4 3 3 4 -3a6 6 0 0 1 -8 6z" stroke="#ddd" strokeWidth="2" /></Svg>
        <Svg size="w-[14px] h-[14px]">
          <path d="M2 2h17l4 4v16H2z" fill="#222" stroke="#999" strokeWidth="2" />
          <path d="M10 5h4v6h4l-6 8 -6 -8h4z" fill="#f02020" />
        </Svg>
        <Svg size="w-[14px] h-[14px]">
          <path d="M2 2h17l4 4v16H2z" fill="#222" stroke="#999" strokeWidth="2" />
          <path d="M10 19h4v-6h4l-6 -8 -6 8h4z" fill="#10c010" />
        </Svg>
      </div>
      <span className="ml-[5px]">Día:+Alto 12.333,9 +Bajo 12.236,2</span>
    </div>
  );
}

function Magnifier({ sign, arrows }) {
  return (
    <Svg size="w-5 h-5">
      <path d="M14 14l8 8" stroke="#ddd" strokeWidth="3" />
      <circle cx="10" cy="9" r="7" fill={arrows ? "#8b8f98" : "#000"} stroke="#ccc" strokeWidth="1.500" />
      {sign && <path d={sign === "+" ? "M6 9h8M10 5v8" : "M6 9h8"} stroke={B} strokeWidth="2.500" />}
      {arrows && <path d="M21 2v12M19 4l2 -2 2 2M19 12l2 2 2 -2M1 21h11M3 19l-2 2 2 2M10 19l2 2 -2 2" stroke={B} strokeWidth="1.500" />}
    </Svg>
  );
}

function BottomBar() {
  return (
    <div className="h-[30px] flex items-center bg-linear-to-b from-[#1c1c1c] to-[#0a0a0a] border-t border-[#555]">
      <button className="ml-[2px] w-[71px] h-[22px] flex items-center gap-[4px] px-[3px] rounded-[2px] bg-[#2a84c0] text-white text-[11px]">
        <Svg size="w-[15px] h-4">
          <path d="M20 4L5 12l15 8" stroke="#fff" strokeWidth="3" />
          <circle cx="20" cy="4" r="4" fill="#fff" />
          <circle cx="4" cy="12" r="4" fill="#fff" />
          <circle cx="20" cy="20" r="4" fill="#fff" />
        </Svg>
        Compartir
      </button>
      <button aria-label="Vincular" className="ml-1"><Chain split /></button>
      <button aria-label="Informe" className="ml-[5px]">
        <Svg size="w-5 h-5">
          <path d="M4 2h16v20H4z" fill="#444c54" />
          <path d="M6 6h8M8 10h9M6 14h8M10 18h7" stroke="#ccc" strokeWidth="2" />
          <path d="M14 3h7l-3 6z" fill="#e03030" />
          <path d="M3 21l4 -6 4 6z" fill="#00b000" />
        </Svg>
      </button>
      <button aria-label="Libro de órdenes" className="ml-[9px]">
        <Svg size="w-5 h-5">
          <path d="M3 2h9v3H3zM7 7h5v3H7zM3 12h9v3H3zM7 16h5v3H7zM3 20h9v3H3z" fill="#00c800" />
          <path d="M12 2h6v3h-6zM12 7h9v3h-9zM12 12h6v3h-6zM12 16h9v3h-9zM12 20h5v3h-5z" fill="#f04040" />
          <path d="M3 5h15v2H3zM7 10h14v2H7zM3 15h15v1H3z" fill="#d8d8a0" fillOpacity="0.500" />
        </Svg>
      </button>
      <div className="ml-[5px] mr-1 flex-1 h-[17px] flex border border-[#555] rounded-[3px] bg-black">
        <button aria-label="Desplazar a la izquierda" className="w-[15px] bg-[#222] border-r border-[#555] flex items-center justify-center">
          <svg viewBox="0 0 4 8" className="w-1 h-2"><path d="M4 0v8L0 4z" fill="#eee" /></svg>
        </button>
        <span className="flex-[1271]" />
        <span className="flex-[975] bg-linear-to-b from-[#2c2c2c] to-[#161616] border-x border-[#555] flex items-center justify-center">
          <span className="w-2 h-[5px] border-y border-[#444]" />
        </span>
        <button aria-label="Desplazar a la derecha" className="w-[15px] bg-[#222] flex items-center justify-center">
          <svg viewBox="0 0 4 8" className="w-1 h-2"><path d="M0 0v8l4 -4z" fill="#eee" /></svg>
        </button>
      </div>
      <div className="flex gap-2 mr-[5px]">
        <button aria-label="Configurar gráfico">
          <Svg size="w-5 h-5">
            <path d="M2 12h7v9H2z" stroke="#c02020" fill="#f4f4f4" />
            <path d="M15 3h7v18h-7z" fill="#00c000" stroke="#ddd" />
            <path d="M4 21L14 11M13 12a4 4 0 0 1 4 -6l-2 3 2 2 4 -2a5 5 0 0 1 -6 5z" stroke="#fff" strokeWidth="2" />
          </Svg>
        </button>
        <button aria-label="Ajustar zoom"><Magnifier arrows /></button>
        <button aria-label="Alejar"><Magnifier sign="-" /></button>
        <button aria-label="Acercar"><Magnifier sign="+" /></button>
      </div>
    </div>
  );
}

const APPS = [
  { name: "Edge", open: true, icon: <path d="M2 11C3 5 7 2 12 2c6 0 9 4 9 9v3H9c0 4 7 5 11 2v4c-7 4 -16 1 -16 -6 0 -4 3 -7 6 -8 -1 1 -2 3 -2 5h7c0 -3 -1 -5 -4 -5 -4 0 -7 2 -9 5z" fill="#0a84e0" /> },
  {
    name: "Store",
    icon: (
      <>
        <path d="M9 6V3.500a3 3 0 0 1 6 0V6" stroke="#fff" strokeWidth="1.500" />
        <path d="M2 6h20v16H2z" fill="#fff" />
        <path d="M7 9h4.500v4.500H7z" fill="#f04c20" />
        <path d="M12.500 9H17v4.500h-4.500z" fill="#7cb800" />
        <path d="M7 14.500h4.500V19H7z" fill="#10a0f0" />
        <path d="M12.500 14.500H17V19h-4.500z" fill="#ffb800" />
      </>
    ),
  },
  {
    name: "Correo",
    badge: "1",
    icon: (
      <>
        <path d="M1 9L12 1l11 8v12H1z" fill="#fff" />
        <path d="M2 9h20l-10 7z" fill="#0a1119" />
      </>
    ),
  },
  {
    name: "Explorador",
    open: true,
    icon: (
      <>
        <path d="M2 3h8l2 2h10v17H2z" fill="#f4cc60" />
        <path d="M2 7h20v15H2z" fill="#fbe08a" />
        <path d="M5 13h14v9h-4v-5H9v5H5z" fill="#3ca0e0" />
      </>
    ),
  },
  {
    name: "Plataforma",
    open: true,
    icon: (
      <>
        <circle cx="16" cy="6" r="6" fill="#2878e8" />
        <circle cx="7" cy="17" r="6" fill="#d02828" />
      </>
    ),
  },
  {
    name: "ProRealTime",
    open: true,
    active: true,
    icon: (
      <>
        <path d="M6 7v17M17 0v22" stroke="#888" />
        <path d="M2 10h8v12H2z" fill="#e85858" />
        <path d="M13 4h8v15h-8z" fill="#44d844" />
      </>
    ),
  },
  {
    name: "Fotos",
    open: true,
    icon: (
      <>
        <path d="M1.500 2.500h21v19h-21z" stroke="#fff" fill="#0a1119" />
        <path d="M2 19l6 -9 5 6 3 -4 6 7v3H2z" fill="#fff" />
      </>
    ),
  },
  {
    name: "Paint",
    open: true,
    icon: (
      <>
        <path d="M12 4C5 4 1 9 2 15s9 9 14 6c3 -2 -1 -4 1 -6s5 0 5 -3c0 -5 -5 -8 -10 -8z" fill="#c8e4f4" />
        <circle cx="7" cy="11" r="2" fill="#e03030" />
        <circle cx="12" cy="8" r="2" fill="#f0b020" />
        <circle cx="6" cy="16" r="2" fill="#30a040" />
        <circle cx="11" cy="18" r="2" fill="#3060d0" />
        <path d="M22 1l-9 16" stroke="#c87830" strokeWidth="2.500" />
      </>
    ),
  },
];

function Taskbar() {
  return (
    <div className="h-10 flex items-center bg-[#0a1119] text-white font-['Open_Sans',sans-serif] text-[12px]">
      <button aria-label="Inicio" className="w-12 h-10 flex items-center justify-center">
        <svg viewBox="0 0 16 16" className="w-4 h-4"><path d="M0 2.300l6.500 -.9v6.200H0zM7.300 1.300L16 0v7.600H7.300zM0 8.400h6.500v6.200L0 13.700zM7.300 8.400H16V16l-8.700 -1.300z" fill="#fff" /></svg>
      </button>
      <label className="w-[344px] h-10 flex items-center gap-[10px] px-[10px] bg-[#f2f2f2]">
        <svg viewBox="0 0 22 22" fill="none" className="w-[22px] h-[22px]"><circle cx="11" cy="11" r="8.500" stroke="#111" strokeWidth="3" /></svg>
        <input aria-label="Buscar en Windows" placeholder="Escribe aquí para buscar" className="flex-1 bg-transparent text-[14px] outline-none placeholder:text-[#333]" />
        <Svg size="w-5 h-5"><path d="M9 5a3 3 0 0 1 6 0v8a3 3 0 0 1 -6 0zM6 11v3c0 4 3 5 6 5s6 -1 6 -5v-3M12 19v4M8 23h8" stroke="#222" strokeWidth="1.500" /></Svg>
      </label>
      <button aria-label="Vista de tareas" className="w-[47px] flex justify-center">
        <Svg size="w-5 h-5"><path d="M3 8h12v8H3zM2 5V3h14v2M2 19v2h14v-2M20 2v5M20 10v3M20 16v6" stroke="#fff" strokeWidth="1.700" /></Svg>
      </button>
      <div className="flex ml-1">
        {APPS.map(app => (
          <button key={app.name} aria-label={app.name} className={`relative w-12 h-10 mr-px flex items-center justify-center ${app.active ? "bg-[#3a4048]" : ""}`}>
            <Svg size="w-6 h-6">{app.icon}</Svg>
            {app.badge && (
              <span className="absolute right-[5px] bottom-1 w-4 h-4 rounded-full bg-[#333] border border-[#aaa] text-[10px] leading-[14px]">{app.badge}</span>
            )}
            {app.open && <span className={`absolute bottom-0 h-[3px] bg-[#76b9ed] ${app.active ? "w-12" : "w-10"}`} />}
          </button>
        ))}
      </div>
      <div className="ml-auto flex items-center pr-[3px]">
        <button aria-label="Contactos" className="mr-[22px]">
          <Svg size="w-4 h-4"><path d="M1 22c0 -8 10 -8 10 0M6 16a3 3 0 1 1 .1 0M12 14c1 -5 10 -6 10 1M17 9a4 4 0 1 1 .1 0" stroke="#fff" strokeWidth="1.800" /></Svg>
        </button>
        <button aria-label="Iconos ocultos" className="mr-[7px]">
          <Svg size="w-4 h-4"><path d="M3 16l9 -9 9 9" stroke="#fff" strokeWidth="2" /></Svg>
        </button>
        <button aria-label="Red" className="mr-2">
          <Svg size="w-4 h-4"><path d="M3 22A19 19 0 0 1 22 3M8 22A14 14 0 0 1 22 8M13 22a9 9 0 0 1 9 -9M18 22a4 4 0 0 1 4 -4" stroke="#ddd" strokeWidth="2" /></Svg>
        </button>
        <button aria-label="Volumen" className="mr-[11px]">
          <Svg size="w-[18px] h-[18px]"><path d="M2 9h4l5 -5v16l-5 -5H2zM14 9c2 2 2 4 0 6M17 6c4 4 4 8 0 12M20 4c5 5 5 11 0 16" stroke="#fff" strokeWidth="1.500" /></Svg>
        </button>
        <span>ESP</span>
        <div className="w-[58px] mx-4 text-center leading-[18px] whitespace-nowrap flex flex-col items-center">
          <span>19:52</span>
          <span>25/04/2019</span>
        </div>
        <button aria-label="Notificaciones" className="relative w-6 h-6 mr-[13px]">
          <Svg size="w-5 h-5"><path d="M2 2h19v15H12l-4 4v-4H2z" fill="#fff" /><path d="M5 6h13M5 9.500h13M5 13h9" stroke="#0a1119" strokeWidth="1.300" /></Svg>
          <span className="absolute right-0 bottom-0 w-4 h-4 rounded-full bg-[#333] border border-[#888] text-[10px] leading-[14px]">1</span>
        </button>
        <span className="w-px h-10 bg-[#4a5560]" />
      </div>
    </div>
  );
}

export default function App() {
  return (
    <div className="h-screen flex flex-col bg-black font-['Liberation_Sans',sans-serif] text-[11px] overflow-hidden">
      <header className="h-[59px] flex border-t border-black">
        <div className="flex-1 min-w-0 pl-1 bg-[#0c0c0c]">
          <TitleBar />
          <MainToolbar />
        </div>
        <div className="w-6 bg-[#0c0c0c] border-r-4 border-[#6c6c6c]">
          <div className="h-6 bg-[#8a8a8a] flex items-center justify-end pr-[3px]">
            <button aria-label="Cerrar ventana">
              <svg viewBox="0 0 10 10" className="w-[10px] h-[10px]"><path d="M1 1l8 8M9 1l-8 8" stroke="#fff" strokeWidth="2" /></svg>
            </button>
          </div>
        </div>
      </header>
      <main className="flex-1 min-h-0 flex flex-col border-x-4 border-b-4 border-[#6c6c6c]">
        <ChartToolbar />
        <section className="relative flex-1 min-h-0">
          <Chart />
          <ChartHeader />
        </section>
        <BottomBar />
      </main>
      <Taskbar />
    </div>
  );
}
